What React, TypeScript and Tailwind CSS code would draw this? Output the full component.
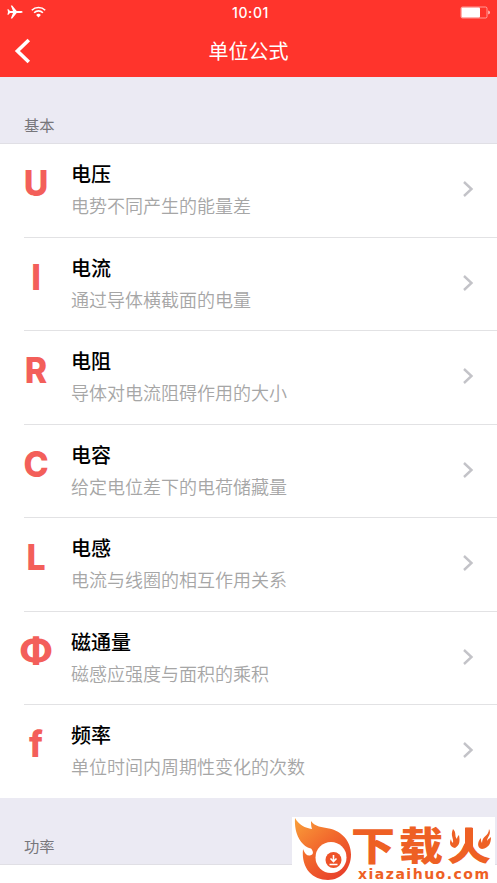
type Item = {
  symbol: string;
  title: string;
  desc: string;
};

const items: Item[] = [
  { symbol: "U", title: "电压", desc: "电势不同产生的能量差" },
  { symbol: "I", title: "电流", desc: "通过导体横截面的电量" },
  { symbol: "R", title: "电阻", desc: "导体对电流阻碍作用的大小" },
  { symbol: "C", title: "电容", desc: "给定电位差下的电荷储藏量" },
  { symbol: "L", title: "电感", desc: "电流与线圈的相互作用关系" },
  { symbol: "Φ", title: "磁通量", desc: "磁感应强度与面积的乘积" },
  { symbol: "f", title: "频率", desc: "单位时间内周期性变化的次数" },
];

const StatusBar = () => (
  <div className="relative flex h-6 items-center justify-between pr-[7px] pl-[7px]">
    <div className="flex items-center gap-2">
      <svg width="16" height="14" viewBox="0 0 16 14" fill="#fff">
        <path d="M15.6 7c0 .6-.8.9-1.6.9H9.7L5.2 13.6H3.8L6 7.9H3L1.400 9.800H.4L1 7 .4 4.200h1L3 6.100h3L3.800.4h1.400l4.500 5.700H14c.8 0 1.600.3 1.600.9z" />
      </svg>
      <svg width="15" height="12" viewBox="0 0 15 12" fill="none" stroke="#fff" strokeWidth="1.6">
        <path d="M.8 4.2a9.6 9.6 0 0 1 13.4 0" />
        <path d="M3.1 6.7a6.3 6.3 0 0 1 8.8 0" />
        <path d="M7.5 11.4 5.1 9a3.4 3.4 0 0 1 4.8 0z" fill="#fff" stroke="none" />
      </svg>
    </div>
    <span className="absolute inset-x-0 top-px pl-1 text-center font-['Inter',sans-serif] text-[14px] leading-6 font-medium tracking-[0.6px] text-white">
      10:01
    </span>
    <svg width="30" height="13" viewBox="0 0 30 13">
      <rect x="1" y="1" width="26" height="11" rx="1.5" fill="none" stroke="#fff" strokeOpacity=".5" />
      <rect x="1.5" y="1.5" width="18.5" height="10" rx="1" fill="#fff" />
      <path d="M28.3 4.6c1 .3 1.5 1 1.5 1.9s-.5 1.6-1.5 1.9z" fill="#fff" fillOpacity=".8" />
    </svg>
  </div>
);

const NavBar = () => (
  <div className="relative flex h-[53px] items-center">
    <svg className="ml-[14px]" width="18" height="26" viewBox="0 0 18 26" fill="none" stroke="#fff" strokeWidth="3.6">
      <path d="M14.8 2 3.4 13l11.4 11" />
    </svg>
    <h1 className="absolute inset-x-0 text-center text-[20px] leading-[53px] text-white">单位公式</h1>
  </div>
);

const SectionHeader = ({ children }: { children: string }) => (
  <h2 className="flex h-[67px] items-end border-b border-[#e0dfe5] bg-[#ebeaf3] pb-[8px] pl-6 text-[15.3px] leading-[22px] font-normal text-[#77767b]">
    {children}
  </h2>
);

const Row = ({ symbol, title, desc }: Item) => (
  <li className="group flex h-[93.5px] pl-6">
    <div className="flex flex-1 border-b border-[#e2e2e4] group-last:border-transparent">
      <div
        className={`flex w-6 justify-center pt-[17px] font-['Inter',sans-serif] text-[36px] leading-[44px] font-extrabold text-[#f35f5a] ${
          symbol === "Φ" ? "scale-x-104" : "scale-x-94"
        }`}
      >
        {symbol}
      </div>
      <div className="flex-1 pt-[15px] pl-[23px]">
        <div className="text-[20px] leading-[30px] font-medium text-black">{title}</div>
        <div className="pt-[3px] text-[18px] leading-[27px] font-[350] text-[#a6a6a6]">{desc}</div>
      </div>
      <svg className="mt-[37px] mr-[22px]" width="14" height="16" viewBox="0 0 14 16" fill="none" stroke="#c3c3c8" strokeWidth="2.4">
        <path d="m3 1 7.5 7L3 15" />
      </svg>
    </div>
  </li>
);

const Watermark = () => (
  <div className="absolute top-[817px] left-[292px] h-[66px] w-[203px] overflow-hidden bg-white text-[#ee6024]">
    <svg className="absolute inset-0" width="203" height="66" viewBox="0 0 203 66">
      <defs>
        <linearGradient id="flame" x1="0" y1="0" x2=".75" y2="1">
          <stop offset="0" stopColor="#f9a03a" />
          <stop offset=".5" stopColor="#f26a2d" />
          <stop offset="1" stopColor="#e8402a" />
        </linearGradient>
      </defs>
      <path
        d="M3 1c4 7 10 10 17 11-1-3-1-5-1-8 4 6 11 6 18 7.500 13 2.500 22 13 22 26C59 52 49 63 36 63 21 63 9 52 11 32c2 5 4 7 7 6.500 4-1 3.500-4 1-7C9 29 2 17 3 1z"
        fill="url(#flame)"
      />
      <circle cx="39" cy="40.500" r="15.500" fill="#fff" />
      <circle cx="41.500" cy="43" r="8" fill="#ee5228" />
      <path d="M41.500 38v6M38.500 41.500l3 3 3-3M37.500 47.500h8" stroke="#fff" strokeWidth="1.600" fill="none" />
    </svg>
    <div className="absolute top-[7px] left-[59px] scale-y-88 text-[44px] leading-[38px] font-black tracking-[4px] whitespace-nowrap">
      下载火
    </div>
    {/* small flames in place of the dots of 火 */}
    <svg className="absolute top-[9px] left-[155px]" width="48" height="40" viewBox="0 0 48 40" fill="#ee6024">
      <path d="M0 0h18v17l-4 6H0zM26 0h22v23H30l-4-6z" fill="#fff" />
      <path d="M18 2h8v19h-8z" />
      <path d="M6 3c4 4 1 7 4 10 0-2 1-3 2-4 1 6 1 10-4 13-5-1-6-5-4-9 0 2 1 3 2 4 1-5-3-7 0-14z" />
      <path d="M42 3c3 5-2 8-2 12 1-2 2-2 4-4 0 6-2 11-9 12-5-1-5-7-1-11 0 3 0 3 1 5 0-7 7-7 7-14z" />
    </svg>
    <div className="absolute top-[48px] left-[66px] font-['DejaVu_Sans',sans-serif] text-[14px] leading-[18px] font-bold tracking-[1.5px] whitespace-nowrap">
      xiazaihuo.com
    </div>
  </div>
);

export default function App() {
  return (
    <div className="relative h-[883px] w-[497px] overflow-hidden bg-white font-['Noto_Sans_CJK_SC',sans-serif]">
      <header className="bg-[#ff342c]">
        <StatusBar />
        <NavBar />
      </header>
      <SectionHeader>基本</SectionHeader>
      <ul className="-mb-px">
        {items.map((item) => (
          <Row key={item.symbol} {...item} />
        ))}
      </ul>
      <SectionHeader>功率</SectionHeader>
      <Watermark />
    </div>
  );
}
